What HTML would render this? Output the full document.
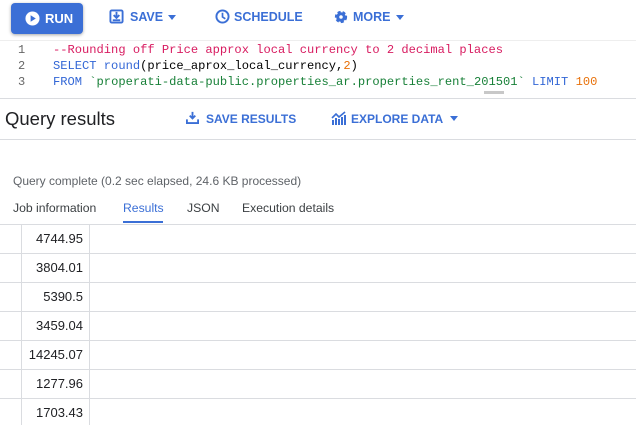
<!DOCTYPE html>
<html><head><style>
*{margin:0;padding:0;box-sizing:border-box}
body{width:636px;height:425px;overflow:hidden;background:#fff;font-family:"Liberation Sans",sans-serif;position:relative}
.a{position:absolute;white-space:nowrap}
.btn{color:#3b6fd6;font-size:12.5px;font-weight:bold;top:10px}
.code{font-family:"Liberation Mono",monospace;font-size:12.1px;}
.ln{color:#666;font-family:"Liberation Mono",monospace;font-size:12px;left:18px}
.hl{position:absolute;background:#dadce0;height:1px;left:0}
.v{position:absolute;background:#dadce0;width:1px}
.num{position:absolute;right:553px;font-size:13px;color:#202124}
</style></head><body>
<div class="a" style="left:11px;top:3px;width:72px;height:31px;background:#3b6fd6;border-radius:4px;box-shadow:0 1px 3px rgba(0,0,0,.35)"></div>
<svg class="a" style="left:25px;top:11px" width="15" height="15" viewBox="0 0 16 16"><circle cx="8" cy="8" r="7.5" fill="#fff"/><path d="M6 4.5v7l5.5-3.5z" fill="#3b6fd6"/></svg>
<div class="a" style="left:45px;top:11px;color:#fff;font-weight:bold;font-size:13px">RUN</div>
<svg class="a" style="left:109px;top:9px" width="15" height="15" viewBox="0 0 16 16"><rect x="1.5" y="1.5" width="13" height="13" rx="1.5" fill="none" stroke="#3b6fd6" stroke-width="2"/><path d="M8 3v6M5 6.5l3 3 3-3" stroke="#3b6fd6" stroke-width="2" fill="none"/><rect x="4" y="11" width="8" height="2" fill="#3b6fd6"/></svg>
<div class="a btn" style="left:130px">SAVE</div>
<div class="a" style="left:168px;top:15px;border:4px solid transparent;border-top:5px solid #3b6fd6"></div>
<svg class="a" style="left:215px;top:9px" width="15" height="15" viewBox="0 0 16 16"><circle cx="8" cy="8" r="6.5" fill="none" stroke="#3b6fd6" stroke-width="2"/><path d="M8 4v4.5l3 2" stroke="#3b6fd6" stroke-width="1.8" fill="none"/></svg>
<div class="a btn" style="left:234px">SCHEDULE</div>
<svg class="a" style="left:334px;top:10px" width="14" height="14" viewBox="0 0 16 16"><circle cx="8" cy="8" r="5" fill="none" stroke="#3b6fd6" stroke-width="4" stroke-dasharray="3 2"/><circle cx="8" cy="8" r="5.5" fill="#3b6fd6"/><circle cx="8" cy="8" r="2" fill="#fff"/></svg>
<div class="a btn" style="left:353px">MORE</div>
<div class="a" style="left:396px;top:15px;border:4px solid transparent;border-top:5px solid #3b6fd6"></div>
<div class="hl" style="top:40px;width:636px;background:#eee"></div>
<div class="a ln" style="top:43px">1</div>
<div class="a ln" style="top:59px">2</div>
<div class="a ln" style="top:75px">3</div>
<div class="a code" style="left:53px;top:43px;color:#d81b60">--Rounding off Price approx local currency to 2 decimal places</div>
<div class="a code" style="left:53px;top:59px"><span style="color:#3367d6">SELECT round</span>(price_aprox_local_currency,<span style="color:#e8710a">2</span>)</div>
<div class="a code" style="left:53px;top:75px"><span style="color:#3367d6">FROM </span><span style="color:#188038">`properati-data-public.properties_ar.properties_rent_201501`</span> <span style="color:#3367d6">LIMIT</span> <span style="color:#e8710a">100</span></div>
<div class="a" style="left:484px;top:91px;width:20px;height:3px;background:#c8c8c8"></div>
<div class="hl" style="top:98px;width:636px"></div>
<div class="a" style="left:5px;top:108px;font-size:18.5px;color:#202124">Query results</div>
<svg class="a" style="left:186px;top:111px" width="13" height="13" viewBox="0 0 14 14"><path d="M7 1v7M4 5l3 3 3-3" stroke="#3b6fd6" stroke-width="2" fill="none"/><path d="M1 9v4h12V9" stroke="#3b6fd6" stroke-width="2" fill="none"/></svg>
<div class="a btn" style="left:206px;top:112px;font-size:12px">SAVE RESULTS</div>
<svg class="a" style="left:331px;top:111px" width="15" height="14" viewBox="0 0 15 14"><path d="M1 7l4-4 3 3 6-5" stroke="#3b6fd6" stroke-width="1.6" fill="none"/><path d="M1 14V9h2v5zM4 14V7h2v7zM7 14V8h2v6zM10 14V6h2v8zM13 14V4h2v10z" fill="#3b6fd6"/></svg>
<div class="a btn" style="left:351px;top:112px;font-size:12px">EXPLORE DATA</div>
<div class="a" style="left:450px;top:116px;border:4.5px solid transparent;border-top:5px solid #3b6fd6"></div>
<div class="hl" style="top:139px;width:636px"></div>
<div class="a" style="left:13px;top:174px;font-size:12px;color:#5f6368">Query complete (0.2 sec elapsed, 24.6 KB processed)</div>
<div class="a" style="left:13px;top:201px;font-size:12.2px;color:#3c4043">Job information</div>
<div class="a" style="left:123px;top:201px;font-size:12.2px;color:#3b6fd6">Results</div>
<div class="a" style="left:123px;top:221px;width:40px;height:2px;background:#3b6fd6"></div>
<div class="a" style="left:187px;top:201px;font-size:12.2px;color:#3c4043">JSON</div>
<div class="a" style="left:242px;top:201px;font-size:12.2px;color:#3c4043">Execution details</div>
<div class="hl" style="top:224px;width:636px"></div>
<div class="v" style="left:21px;top:224px;height:201px"></div>
<div class="v" style="left:89px;top:224px;height:201px"></div>
<div class="hl" style="top:253px;width:636px"></div>
<div class="hl" style="top:282px;width:636px"></div>
<div class="hl" style="top:311px;width:636px"></div>
<div class="hl" style="top:340px;width:636px"></div>
<div class="hl" style="top:369px;width:636px"></div>
<div class="hl" style="top:398px;width:636px"></div>
<div class="num" style="top:231px">4744.95</div>
<div class="num" style="top:260px">3804.01</div>
<div class="num" style="top:289px">5390.5</div>
<div class="num" style="top:318px">3459.04</div>
<div class="num" style="top:347px">14245.07</div>
<div class="num" style="top:376px">1277.96</div>
<div class="num" style="top:405px">1703.43</div>
</body></html>
